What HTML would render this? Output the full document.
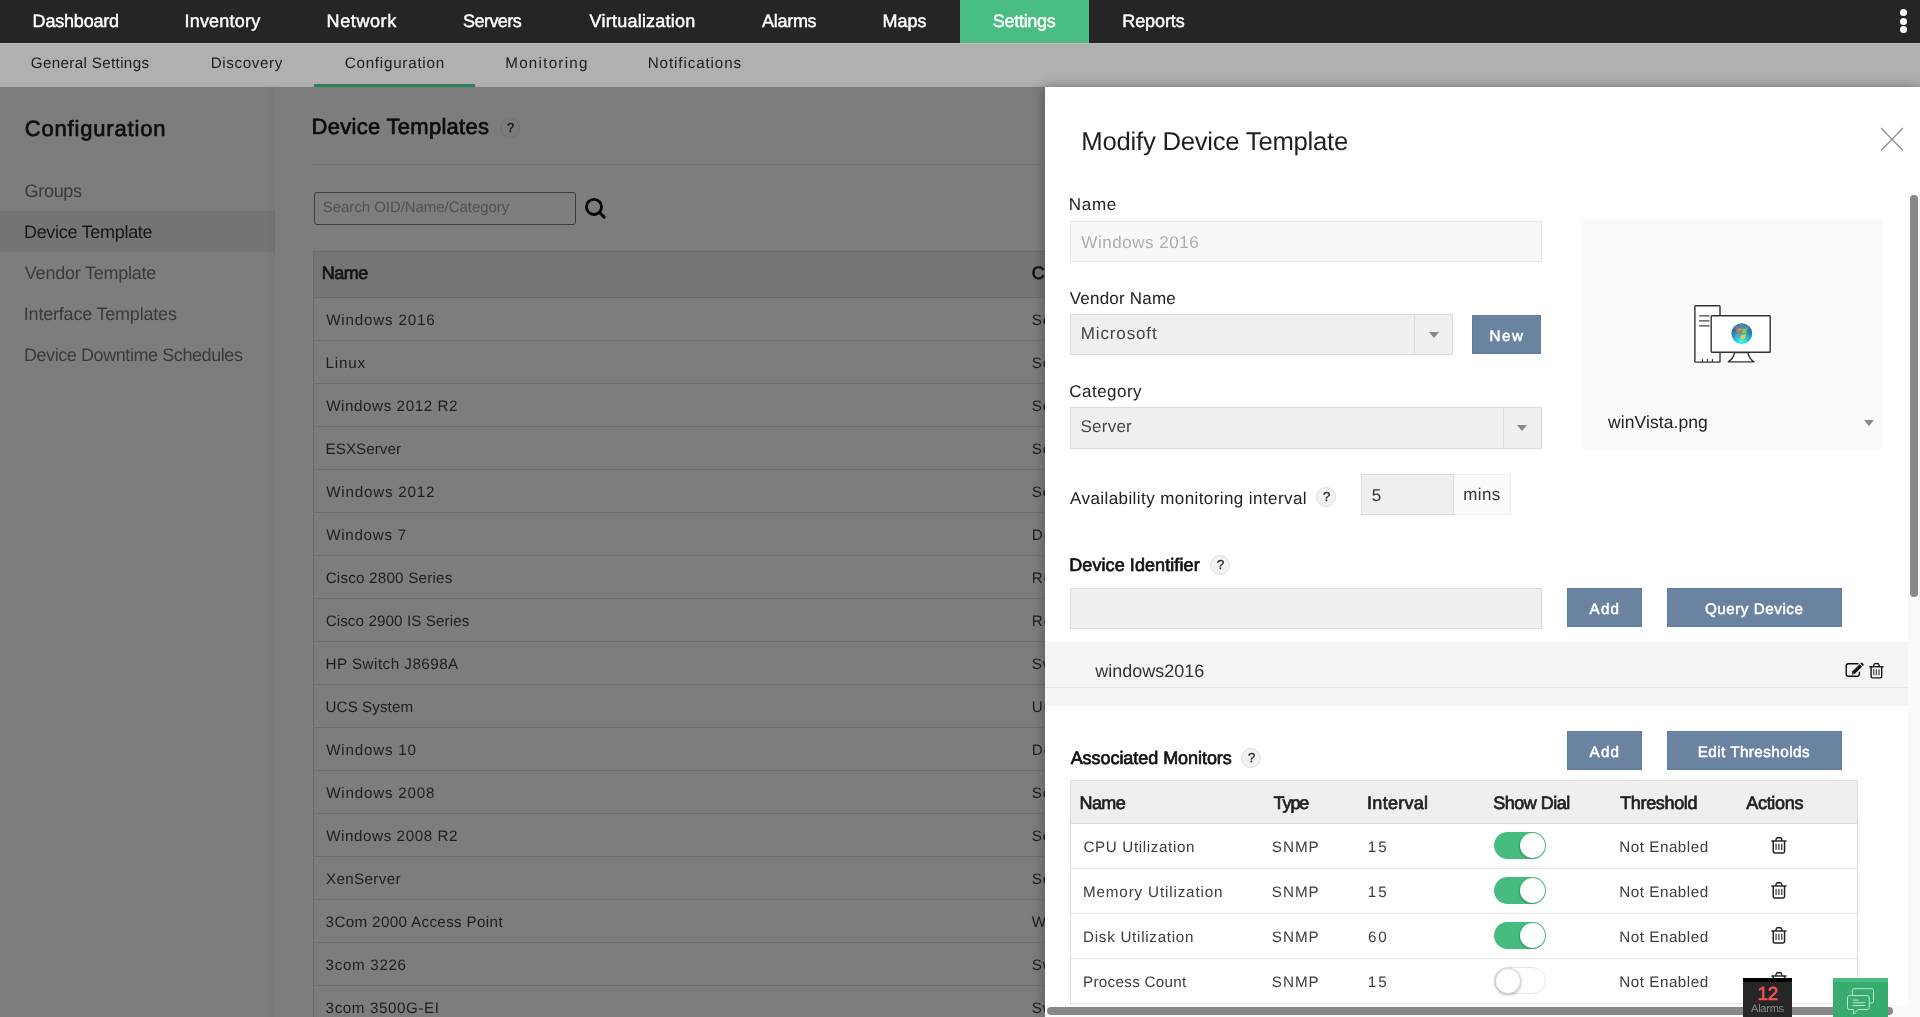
<!DOCTYPE html>
<html lang="en">
<head>
<meta charset="utf-8">
<title>Device Templates</title>
<style>
html,body{margin:0;padding:0;}
body{width:1920px;height:1017px;overflow:hidden;position:relative;background:#7d7d7d;font-family:"Liberation Sans",sans-serif;}
.t{will-change:transform;text-rendering:geometricPrecision;position:absolute;white-space:nowrap;line-height:1;font-family:"Liberation Sans",sans-serif;}
.a{position:absolute;box-sizing:border-box;}
.q{will-change:transform;text-rendering:geometricPrecision;position:absolute;box-sizing:border-box;width:20px;height:20px;border-radius:50%;font-size:13px;line-height:18px;text-indent:1px;-webkit-text-stroke:0.3px;text-align:center;font-family:"Liberation Sans",sans-serif;}
.btn{position:absolute;box-sizing:border-box;background:#6a83a0;border:1px solid #627e9e;}
.hl{position:absolute;height:1px;}
.tog{position:absolute;box-sizing:border-box;width:52px;height:27px;border-radius:14px;background:#46bc7e;}
.tog i{position:absolute;top:0.7px;left:25.8px;width:25.5px;height:25.5px;border-radius:50%;background:#fff;box-shadow:-1px 1px 2px rgba(0,0,0,0.22);}
.tog.off{background:#fff;border:1px solid #e4e4e4;}
.tog.off i{top:-0.5px;left:-0.5px;width:26px;height:26px;box-shadow:0 1px 3px rgba(0,0,0,0.3);border:1px solid #d6d6d6;box-sizing:border-box;}
.arr{position:absolute;width:0;height:0;border-left:5px solid transparent;border-right:5px solid transparent;border-top:6px solid #888;}
svg{position:absolute;overflow:visible;}
</style>
</head>
<body>
<!-- ===== background page (dimmed) ===== -->
<div class="a" style="left:0;top:0;width:1920px;height:43px;background:#252525;"></div>
<div class="a" style="left:960px;top:0;width:129px;height:43px;background:#4abe82;"></div>
<div class="a" style="left:1899.5px;top:9px;width:7px;height:7px;border-radius:50%;background:#fff;"></div>
<div class="a" style="left:1899.5px;top:17.5px;width:7px;height:7px;border-radius:50%;background:#fff;"></div>
<div class="a" style="left:1899.5px;top:26px;width:7px;height:7px;border-radius:50%;background:#fff;"></div>
<div class="a" style="left:0;top:43px;width:1920px;height:44px;background:linear-gradient(#bcbcbc 0,#bcbcbc 1px,#b0b0b0 1.5px,#b0b0b0 90%,#a8a8a8 100%);"></div>
<div class="a" style="left:314px;top:84px;width:161px;height:3px;background:#2c8054;"></div>
<!-- sidebar -->
<div class="a" style="left:0;top:87px;width:275px;height:930px;background:linear-gradient(to right,#7d7d7d 0,#7d7d7d 268px,#787878 275px);"></div>
<div class="a" style="left:0;top:211px;width:275px;height:41px;background:linear-gradient(to right,#747476 0,#747476 268px,#707072 275px);"></div>
<!-- main -->
<div class="q" style="left:500px;top:118px;background:#7b7b7b;border:1px solid #727272;color:#111;">?</div>
<div class="hl" style="left:313px;top:164px;width:1607px;background:#757575;"></div>
<div class="a" style="left:314px;top:192px;width:262px;height:33px;border:1px solid #3c3c3c;border-radius:3px;"></div>
<svg style="left:583px;top:196px;" width="26" height="26" viewBox="583 196 26 26"><circle cx="594" cy="206.9" r="7.55" fill="none" stroke="#060606" stroke-width="2.9"/><path d="M599.6 212.5 L604.2 217.1" stroke="#060606" stroke-width="3.1" stroke-linecap="round"/></svg>
<div class="a" style="left:313px;top:251px;width:1600px;height:47px;background:#757575;border:1px solid #6a6a6a;"></div>
<div class="a" style="left:313px;top:298px;width:1px;height:719px;background:#6e6e6e;"></div>
<div class="hl" style="left:314px;top:340px;width:1600px;background:#6e6e6e;"></div>
<div class="hl" style="left:314px;top:383px;width:1600px;background:#6e6e6e;"></div>
<div class="hl" style="left:314px;top:426px;width:1600px;background:#6e6e6e;"></div>
<div class="hl" style="left:314px;top:469px;width:1600px;background:#6e6e6e;"></div>
<div class="hl" style="left:314px;top:512px;width:1600px;background:#6e6e6e;"></div>
<div class="hl" style="left:314px;top:555px;width:1600px;background:#6e6e6e;"></div>
<div class="hl" style="left:314px;top:598px;width:1600px;background:#6e6e6e;"></div>
<div class="hl" style="left:314px;top:641px;width:1600px;background:#6e6e6e;"></div>
<div class="hl" style="left:314px;top:684px;width:1600px;background:#6e6e6e;"></div>
<div class="hl" style="left:314px;top:727px;width:1600px;background:#6e6e6e;"></div>
<div class="hl" style="left:314px;top:770px;width:1600px;background:#6e6e6e;"></div>
<div class="hl" style="left:314px;top:813px;width:1600px;background:#6e6e6e;"></div>
<div class="hl" style="left:314px;top:856px;width:1600px;background:#6e6e6e;"></div>
<div class="hl" style="left:314px;top:899px;width:1600px;background:#6e6e6e;"></div>
<div class="hl" style="left:314px;top:942px;width:1600px;background:#6e6e6e;"></div>
<div class="hl" style="left:314px;top:985px;width:1600px;background:#6e6e6e;"></div>

<span class="t" style="left:32px;padding-left:0.62px;top:12.00px;font-size:18px;color:#fff;-webkit-text-stroke:0.45px #fff;letter-spacing:-0.194px;">Dashboard</span>
<span class="t" style="left:184px;padding-left:0.53px;top:12.00px;font-size:18px;color:#fff;-webkit-text-stroke:0.45px #fff;letter-spacing:0.198px;">Inventory</span>
<span class="t" style="left:326px;padding-left:0.62px;top:12.00px;font-size:18px;color:#fff;-webkit-text-stroke:0.45px #fff;letter-spacing:0.597px;">Network</span>
<span class="t" style="left:462px;padding-left:0.98px;top:12.00px;font-size:18px;color:#fff;-webkit-text-stroke:0.45px #fff;letter-spacing:-0.532px;">Servers</span>
<span class="t" style="left:589px;padding-left:0.52px;top:12.00px;font-size:18px;color:#fff;-webkit-text-stroke:0.45px #fff;letter-spacing:0.239px;">Virtualization</span>
<span class="t" style="left:762px;padding-left:0.02px;top:12.00px;font-size:18px;color:#fff;-webkit-text-stroke:0.45px #fff;letter-spacing:-0.283px;">Alarms</span>
<span class="t" style="left:882px;padding-left:0.62px;top:12.00px;font-size:18px;color:#fff;-webkit-text-stroke:0.45px #fff;letter-spacing:-0.004px;">Maps</span>
<span class="t" style="left:992px;padding-left:0.79px;top:12.00px;font-size:18px;color:#fff;-webkit-text-stroke:0.45px #fff;letter-spacing:-0.293px;">Settings</span>
<span class="t" style="left:1122px;padding-left:0.29px;top:12.00px;font-size:18px;color:#fff;-webkit-text-stroke:0.45px #fff;letter-spacing:-0.101px;">Reports</span>
<span class="t" style="left:30px;padding-left:0.72px;top:56.00px;font-size:15.2px;color:#1c1c1c;letter-spacing:0.347px;">General Settings</span>
<span class="t" style="left:210px;padding-left:0.78px;top:56.00px;font-size:15.2px;color:#1c1c1c;letter-spacing:0.612px;">Discovery</span>
<span class="t" style="left:344px;padding-left:0.72px;top:56.00px;font-size:15.2px;color:#1c1c1c;letter-spacing:0.758px;">Configuration</span>
<span class="t" style="left:505px;padding-left:0.27px;top:56.00px;font-size:15.2px;color:#1c1c1c;letter-spacing:1.254px;">Monitoring</span>
<span class="t" style="left:647px;padding-left:0.78px;top:56.00px;font-size:15.2px;color:#1c1c1c;letter-spacing:0.885px;">Notifications</span>
<span class="t" style="left:24px;padding-left:0.77px;top:118.00px;font-size:22px;color:#0e0e0e;-webkit-text-stroke:0.7px #0e0e0e;letter-spacing:0.818px;">Configuration</span>
<span class="t" style="left:24px;padding-left:0.52px;top:182.00px;font-size:18px;color:#3a3a3a;letter-spacing:-0.297px;">Groups</span>
<span class="t" style="left:23px;padding-left:0.94px;top:223.00px;font-size:18px;color:#161616;letter-spacing:-0.293px;">Device Template</span>
<span class="t" style="left:24px;padding-left:0.83px;top:264.00px;font-size:18px;color:#3a3a3a;letter-spacing:-0.230px;">Vendor Template</span>
<span class="t" style="left:23px;padding-left:0.82px;top:305.00px;font-size:18px;color:#3a3a3a;letter-spacing:-0.205px;">Interface Templates</span>
<span class="t" style="left:23px;padding-left:0.94px;top:346.00px;font-size:18px;color:#3a3a3a;letter-spacing:-0.423px;">Device Downtime Schedules</span>
<span class="t" style="left:311px;padding-left:0.61px;top:116.00px;font-size:22px;color:#0c0c0c;-webkit-text-stroke:0.7px #0c0c0c;letter-spacing:0.276px;">Device Templates</span>
<span class="t" style="left:322px;padding-left:0.80px;top:200.00px;font-size:15px;color:#505050;letter-spacing:-0.050px;">Search OID/Name/Category</span>
<span class="t" style="left:321px;padding-left:0.68px;top:264.00px;font-size:18px;color:#141414;-webkit-text-stroke:0.7px #141414;letter-spacing:-0.509px;">Name</span>
<span class="t" style="left:1031px;padding-left:0.70px;top:264.00px;font-size:18px;color:#141414;-webkit-text-stroke:0.7px #141414;">Category</span>
<span class="t" style="left:326px;padding-left:0.14px;top:313.00px;font-size:15.2px;color:#1e1e1e;letter-spacing:0.804px;">Windows 2016</span>
<span class="t" style="left:1031px;padding-left:0.84px;top:313.00px;font-size:15.2px;color:#1e1e1e;letter-spacing:0.9px;">Server</span>
<span class="t" style="left:325px;padding-left:0.53px;top:356.00px;font-size:15.2px;color:#1e1e1e;letter-spacing:0.804px;">Linux</span>
<span class="t" style="left:1031px;padding-left:0.84px;top:356.00px;font-size:15.2px;color:#1e1e1e;letter-spacing:0.9px;">Server</span>
<span class="t" style="left:326px;padding-left:0.14px;top:399.00px;font-size:15.2px;color:#1e1e1e;letter-spacing:0.581px;">Windows 2012 R2</span>
<span class="t" style="left:1031px;padding-left:0.84px;top:399.00px;font-size:15.2px;color:#1e1e1e;letter-spacing:0.9px;">Server</span>
<span class="t" style="left:325px;padding-left:0.53px;top:442.00px;font-size:15.2px;color:#1e1e1e;letter-spacing:0.054px;">ESXServer</span>
<span class="t" style="left:1031px;padding-left:0.84px;top:442.00px;font-size:15.2px;color:#1e1e1e;letter-spacing:0.9px;">Server</span>
<span class="t" style="left:326px;padding-left:0.14px;top:485.00px;font-size:15.2px;color:#1e1e1e;letter-spacing:0.798px;">Windows 2012</span>
<span class="t" style="left:1031px;padding-left:0.84px;top:485.00px;font-size:15.2px;color:#1e1e1e;letter-spacing:0.9px;">Server</span>
<span class="t" style="left:326px;padding-left:0.14px;top:528.00px;font-size:15.2px;color:#1e1e1e;letter-spacing:0.712px;">Windows 7</span>
<span class="t" style="left:1031px;padding-left:0.84px;top:528.00px;font-size:15.2px;color:#1e1e1e;letter-spacing:0.9px;">Desktop</span>
<span class="t" style="left:325px;padding-left:0.64px;top:571.00px;font-size:15.2px;color:#1e1e1e;letter-spacing:0.216px;">Cisco 2800 Series</span>
<span class="t" style="left:1031px;padding-left:0.84px;top:571.00px;font-size:15.2px;color:#1e1e1e;letter-spacing:0.9px;">Router</span>
<span class="t" style="left:325px;padding-left:0.64px;top:614.00px;font-size:15.2px;color:#1e1e1e;letter-spacing:0.100px;">Cisco 2900 IS Series</span>
<span class="t" style="left:1031px;padding-left:0.84px;top:614.00px;font-size:15.2px;color:#1e1e1e;letter-spacing:0.9px;">Router</span>
<span class="t" style="left:325px;padding-left:0.53px;top:657.00px;font-size:15.2px;color:#1e1e1e;letter-spacing:0.480px;">HP Switch J8698A</span>
<span class="t" style="left:1031px;padding-left:0.84px;top:657.00px;font-size:15.2px;color:#1e1e1e;letter-spacing:0.9px;">Switch</span>
<span class="t" style="left:325px;padding-left:0.60px;top:700.00px;font-size:15.2px;color:#1e1e1e;letter-spacing:0.061px;">UCS System</span>
<span class="t" style="left:1031px;padding-left:0.84px;top:700.00px;font-size:15.2px;color:#1e1e1e;letter-spacing:0.9px;">UCS</span>
<span class="t" style="left:326px;padding-left:0.14px;top:743.00px;font-size:15.2px;color:#1e1e1e;letter-spacing:0.791px;">Windows 10</span>
<span class="t" style="left:1031px;padding-left:0.84px;top:743.00px;font-size:15.2px;color:#1e1e1e;letter-spacing:0.9px;">Desktop</span>
<span class="t" style="left:326px;padding-left:0.14px;top:786.00px;font-size:15.2px;color:#1e1e1e;letter-spacing:0.798px;">Windows 2008</span>
<span class="t" style="left:1031px;padding-left:0.84px;top:786.00px;font-size:15.2px;color:#1e1e1e;letter-spacing:0.9px;">Server</span>
<span class="t" style="left:326px;padding-left:0.14px;top:829.00px;font-size:15.2px;color:#1e1e1e;letter-spacing:0.581px;">Windows 2008 R2</span>
<span class="t" style="left:1031px;padding-left:0.84px;top:829.00px;font-size:15.2px;color:#1e1e1e;letter-spacing:0.9px;">Server</span>
<span class="t" style="left:326px;padding-left:0.03px;top:872.00px;font-size:15.2px;color:#1e1e1e;letter-spacing:0.345px;">XenServer</span>
<span class="t" style="left:1031px;padding-left:0.84px;top:872.00px;font-size:15.2px;color:#1e1e1e;letter-spacing:0.9px;">Server</span>
<span class="t" style="left:325px;padding-left:0.62px;top:915.00px;font-size:15.2px;color:#1e1e1e;letter-spacing:0.348px;">3Com 2000 Access Point</span>
<span class="t" style="left:1031px;padding-left:0.84px;top:915.00px;font-size:15.2px;color:#1e1e1e;letter-spacing:0.9px;">Wireless</span>
<span class="t" style="left:325px;padding-left:0.62px;top:958.00px;font-size:15.2px;color:#1e1e1e;letter-spacing:0.664px;">3com 3226</span>
<span class="t" style="left:1031px;padding-left:0.84px;top:958.00px;font-size:15.2px;color:#1e1e1e;letter-spacing:0.9px;">Switch</span>
<span class="t" style="left:325px;padding-left:0.62px;top:1001.00px;font-size:15.2px;color:#1e1e1e;letter-spacing:0.583px;">3com 3500G-EI</span>
<span class="t" style="left:1031px;padding-left:0.84px;top:1001.00px;font-size:15.2px;color:#1e1e1e;letter-spacing:0.9px;">Switch</span>

<!-- ===== modal ===== -->
<div class="a" style="left:1045px;top:87px;width:875px;height:930px;background:#fff;box-shadow:0 0 13px rgba(0,0,0,0.32);"></div>
<svg style="left:1881px;top:127.5px;" width="22" height="22.5" viewBox="0 0 22 22.5"><path d="M0 0 L22 22.5 M22 0 L0 22.5" stroke="#8a8a8a" stroke-width="1.1" fill="none"/></svg>
<!-- name -->
<div class="a" style="left:1070px;top:221px;width:472px;height:41px;background:#f8f8f8;border:1px solid #e7e7e7;"></div>
<!-- vendor -->
<div class="a" style="left:1070px;top:314px;width:383px;height:41px;background:#f0f0f0;border:1px solid #dcdcdc;"></div>
<div class="a" style="left:1414px;top:315px;width:1px;height:39px;background:#dcdcdc;"></div>
<div class="arr" style="left:1429px;top:332px;"></div>
<div class="btn" style="left:1472px;top:315px;width:69px;height:39px;"></div>
<!-- category -->
<div class="a" style="left:1070px;top:407px;width:472px;height:42px;background:#f0f0f0;border:1px solid #dcdcdc;"></div>
<div class="a" style="left:1503px;top:408px;width:1px;height:40px;background:#dcdcdc;"></div>
<div class="arr" style="left:1517px;top:425px;"></div>
<!-- image box -->
<div class="a" style="left:1583px;top:220px;width:300px;height:229px;background:#f9f9fb;"></div>
<div class="arr" style="left:1864px;top:420px;"></div>
<svg style="left:1690px;top:300px;" width="90" height="70" viewBox="1690 300 90 70">
<defs><radialGradient id="orb" cx="50%" cy="88%" r="80%"><stop offset="0" stop-color="#3af8f2"/><stop offset="0.3" stop-color="#22d3dc"/><stop offset="0.6" stop-color="#2595b9"/><stop offset="1" stop-color="#2d6090"/></radialGradient></defs>
<rect x="1694.9" y="305.8" width="25.1" height="56.3" rx="0.8" fill="#fff" stroke="#333" stroke-width="1.4"/>
<path d="M1699.1 315.9H1709.5M1699.1 320.8H1709.5M1699.1 325.8H1709.5" stroke="#444" stroke-width="1.2"/>
<path d="M1702.4 359V362M1707.4 359V362M1712.4 359V362" stroke="#333" stroke-width="1.1"/>
<path d="M1734.6 352.5 C1733.6 357 1731.5 360 1728.2 361.8 H1754.1 C1750.8 360 1748.8 357 1747.8 352.5 Z" fill="#fff" stroke="#333" stroke-width="1.3" stroke-linejoin="round"/>
<rect x="1711.2" y="315.8" width="59" height="36.4" rx="0.8" fill="#fff" stroke="#333" stroke-width="1.4"/>
<circle cx="1741.8" cy="333.6" r="10.4" fill="url(#orb)"/>
<path d="M1736.9 329.2 q2.2-1.6 4.6-.5 l-.9 4.3 q-2.4-1-4.6.5z" fill="#f2683a"/>
<path d="M1742.5 329 q2.4 1 4.8-.4 l-1 4.4 q-2.3 1.3-4.7.3z" fill="#8cc63e"/>
<path d="M1735.7 334.6 q2.3-1.5 4.6-.4 l-.9 4.2 q-2.3-1-4.6.5z" fill="#5aa5dc"/>
<path d="M1741.2 334.5 q2.4 1 4.8-.4 l-1 4.3 q-2.4 1.4-4.7.3z" fill="#fbc531"/>
<ellipse cx="1741.8" cy="327" rx="7.5" ry="3.6" fill="#fff" opacity="0.18"/>
</svg>
<!-- interval -->
<div class="q" style="left:1316px;top:487px;background:#f1f1f1;border:1px solid #dedede;color:#222;">?</div>
<div class="a" style="left:1361px;top:474px;width:93px;height:41px;background:#f0f0f0;border:1px solid #dcdcdc;"></div>
<div class="a" style="left:1454px;top:474px;width:57px;height:41px;background:#fafafa;border:1px solid #efefef;border-left:0;"></div>
<!-- identifier -->
<div class="q" style="left:1210px;top:555px;background:#f1f1f1;border:1px solid #dedede;color:#222;">?</div>
<div class="a" style="left:1070px;top:588px;width:472px;height:41px;background:#f0f0f0;border:1px solid #dcdcdc;"></div>
<div class="btn" style="left:1567px;top:588px;width:75px;height:39px;"></div>
<div class="btn" style="left:1667px;top:588px;width:175px;height:39px;"></div>
<div class="a" style="left:1045px;top:642px;width:863px;height:64px;background:#f5f5f5;"></div>
<div class="hl" style="left:1045px;top:687px;width:863px;background:#e6e6e6;"></div>
<svg style="left:1845px;top:662px;" width="20" height="16" viewBox="0 0 20 16">
<path d="M13 1.7 H3.4 Q1.2 1.7 1.2 3.9 V12 Q1.2 14.2 3.4 14.2 H12.2 Q14.4 14.2 14.4 12 V10.2" stroke="#111" stroke-width="1.4" fill="none" stroke-linecap="round"/>
<path d="M7.1 9.6 L14.5 2.2 L17.0 4.7 L9.6 12.1 L6.7 12.8 Z" fill="#111"/>
<path d="M15.3 1.5 L16.1 0.7 Q16.6 0.3 17.1 0.7 L18.6 2.2 Q19 2.7 18.6 3.2 L17.8 4.0 Z" fill="#111"/>
<path d="M7.8 10.4 L8.9 11.5 L7.5 11.9 Z" fill="#f5f5f5"/>
<path d="M9.4 8.3 L13.8 3.9" stroke="#f5f5f5" stroke-width="0.5" stroke-dasharray="0.8 0.7"/>
</svg>
<svg style="left:1869.1px;top:662.7px;" width="15" height="16" viewBox="0 0 15 16">
<path d="M0.2 3.75H14.6" stroke="#111" stroke-width="1.35" fill="none"/>
<path d="M4.3 3.6 L5.3 0.95 Q5.5 0.65 5.9 0.65 H8.9 Q9.3 0.65 9.5 0.95 L10.5 3.6" stroke="#111" stroke-width="1.3" fill="none"/>
<path d="M2.1 3.8 V13.6 Q2.1 14.9 3.4 14.9 H11.4 Q12.7 14.9 12.7 13.6 V3.8" stroke="#111" stroke-width="1.4" fill="none"/>
<path d="M4.75 6.3V12.3M7.4 6.3V12.3M10.05 6.3V12.3" stroke="#555" stroke-width="1.35" fill="none"/>
</svg>
<!-- monitors -->
<div class="q" style="left:1241px;top:748px;background:#f1f1f1;border:1px solid #dedede;color:#222;">?</div>
<div class="btn" style="left:1567px;top:731px;width:75px;height:39px;"></div>
<div class="btn" style="left:1667px;top:731px;width:175px;height:39px;"></div>
<div class="a" style="left:1070px;top:780px;width:788px;height:240px;border:1px solid #dcdcdc;"></div>
<div class="a" style="left:1071px;top:781px;width:786px;height:43px;background:#efefef;"></div>
<div class="hl" style="left:1071px;top:823px;width:786px;background:#d8d8d8;"></div>
<div class="hl" style="left:1071px;top:868px;width:786px;background:#e4e4e4;"></div>
<div class="hl" style="left:1071px;top:913px;width:786px;background:#e4e4e4;"></div>
<div class="hl" style="left:1071px;top:958px;width:786px;background:#e4e4e4;"></div>
<div class="hl" style="left:1071px;top:1003px;width:786px;background:#e4e4e4;"></div>
<div class="tog" style="left:1494px;top:832px;"><i></i></div>
<div class="tog" style="left:1494px;top:877px;"><i></i></div>
<div class="tog" style="left:1494px;top:922px;"><i></i></div>
<div class="tog off" style="left:1494px;top:967px;"><i></i></div>
<svg style="left:1771.1px;top:837.4px;" width="16" height="17.07" viewBox="0 0 15 16">
<path d="M0.2 3.75H14.6" stroke="#222" stroke-width="1.35" fill="none"/>
<path d="M4.3 3.6 L5.3 0.95 Q5.5 0.65 5.9 0.65 H8.9 Q9.3 0.65 9.5 0.95 L10.5 3.6" stroke="#222" stroke-width="1.3" fill="none"/>
<path d="M2.1 3.8 V13.6 Q2.1 14.9 3.4 14.9 H11.4 Q12.7 14.9 12.7 13.6 V3.8" stroke="#222" stroke-width="1.4" fill="none"/>
<path d="M4.75 6.3V12.3M7.4 6.3V12.3M10.05 6.3V12.3" stroke="#555" stroke-width="1.35" fill="none"/>
</svg>
<svg style="left:1771.1px;top:882.4px;" width="16" height="17.07" viewBox="0 0 15 16">
<path d="M0.2 3.75H14.6" stroke="#222" stroke-width="1.35" fill="none"/>
<path d="M4.3 3.6 L5.3 0.95 Q5.5 0.65 5.9 0.65 H8.9 Q9.3 0.65 9.5 0.95 L10.5 3.6" stroke="#222" stroke-width="1.3" fill="none"/>
<path d="M2.1 3.8 V13.6 Q2.1 14.9 3.4 14.9 H11.4 Q12.7 14.9 12.7 13.6 V3.8" stroke="#222" stroke-width="1.4" fill="none"/>
<path d="M4.75 6.3V12.3M7.4 6.3V12.3M10.05 6.3V12.3" stroke="#555" stroke-width="1.35" fill="none"/>
</svg>
<svg style="left:1771.1px;top:927.4px;" width="16" height="17.07" viewBox="0 0 15 16">
<path d="M0.2 3.75H14.6" stroke="#222" stroke-width="1.35" fill="none"/>
<path d="M4.3 3.6 L5.3 0.95 Q5.5 0.65 5.9 0.65 H8.9 Q9.3 0.65 9.5 0.95 L10.5 3.6" stroke="#222" stroke-width="1.3" fill="none"/>
<path d="M2.1 3.8 V13.6 Q2.1 14.9 3.4 14.9 H11.4 Q12.7 14.9 12.7 13.6 V3.8" stroke="#222" stroke-width="1.4" fill="none"/>
<path d="M4.75 6.3V12.3M7.4 6.3V12.3M10.05 6.3V12.3" stroke="#555" stroke-width="1.35" fill="none"/>
</svg>
<svg style="left:1771.1px;top:972.4px;" width="16" height="17.07" viewBox="0 0 15 16">
<path d="M0.2 3.75H14.6" stroke="#222" stroke-width="1.35" fill="none"/>
<path d="M4.3 3.6 L5.3 0.95 Q5.5 0.65 5.9 0.65 H8.9 Q9.3 0.65 9.5 0.95 L10.5 3.6" stroke="#222" stroke-width="1.3" fill="none"/>
<path d="M2.1 3.8 V13.6 Q2.1 14.9 3.4 14.9 H11.4 Q12.7 14.9 12.7 13.6 V3.8" stroke="#222" stroke-width="1.4" fill="none"/>
<path d="M4.75 6.3V12.3M7.4 6.3V12.3M10.05 6.3V12.3" stroke="#555" stroke-width="1.35" fill="none"/>
</svg>
<span class="t" style="left:1081px;padding-left:0.35px;top:130.00px;font-size:25.7px;color:#1f1f1f;letter-spacing:-0.251px;">Modify Device Template</span>
<span class="t" style="left:1068px;padding-left:0.82px;top:196.00px;font-size:17px;color:#222;letter-spacing:0.683px;">Name</span>
<span class="t" style="left:1081px;padding-left:0.33px;top:234.00px;font-size:17px;color:#adadad;letter-spacing:0.523px;">Windows 2016</span>
<span class="t" style="left:1069px;padding-left:0.74px;top:290.00px;font-size:17px;color:#222;letter-spacing:0.212px;">Vendor Name</span>
<span class="t" style="left:1080px;padding-left:0.85px;top:325.00px;font-size:17px;color:#444;letter-spacing:0.855px;">Microsoft</span>
<span class="t" style="left:1489px;padding-left:0.60px;top:329.00px;font-size:15.2px;color:#fff;-webkit-text-stroke:0.55px #fff;letter-spacing:1.454px;">New</span>
<span class="t" style="left:1069px;padding-left:0.32px;top:383.00px;font-size:17px;color:#222;letter-spacing:0.464px;">Category</span>
<span class="t" style="left:1080px;padding-left:0.45px;top:418.00px;font-size:17px;color:#444;letter-spacing:0.254px;">Server</span>
<span class="t" style="left:1070px;padding-left:0.07px;top:490.00px;font-size:17px;color:#222;letter-spacing:0.415px;">Availability monitoring interval</span>
<span class="t" style="left:1371px;padding-left:0.87px;top:487.00px;font-size:17px;color:#333;letter-spacing:1.231px;">5</span>
<span class="t" style="left:1463px;padding-left:0.35px;top:486.00px;font-size:17px;color:#333;letter-spacing:0.332px;">mins</span>
<span class="t" style="left:1069px;padding-left:0.26px;top:556.00px;font-size:18px;color:#111;-webkit-text-stroke:0.7px #111;letter-spacing:0.082px;">Device Identifier</span>
<span class="t" style="left:1589px;padding-left:0.61px;top:602.00px;font-size:15.2px;color:#fff;-webkit-text-stroke:0.55px #fff;letter-spacing:1.173px;">Add</span>
<span class="t" style="left:1704px;padding-left:0.93px;top:602.00px;font-size:15.2px;color:#fff;-webkit-text-stroke:0.55px #fff;letter-spacing:0.542px;">Query Device</span>
<span class="t" style="left:1095px;padding-left:0.28px;top:662.00px;font-size:18px;color:#333;letter-spacing:-0.020px;">windows2016</span>
<span class="t" style="left:1070px;padding-left:0.65px;top:749.00px;font-size:18px;color:#111;-webkit-text-stroke:0.7px #111;letter-spacing:-0.051px;">Associated Monitors</span>
<span class="t" style="left:1589px;padding-left:0.61px;top:745.00px;font-size:15.2px;color:#fff;-webkit-text-stroke:0.55px #fff;letter-spacing:1.173px;">Add</span>
<span class="t" style="left:1697px;padding-left:0.68px;top:745.00px;font-size:15.2px;color:#fff;-webkit-text-stroke:0.55px #fff;letter-spacing:0.469px;">Edit Thresholds</span>
<span class="t" style="left:1079px;padding-left:0.52px;top:794.00px;font-size:18px;color:#222;-webkit-text-stroke:0.7px #222;letter-spacing:-0.629px;">Name</span>
<span class="t" style="left:1273px;padding-left:0.49px;top:794.00px;font-size:18px;color:#222;-webkit-text-stroke:0.7px #222;letter-spacing:-1.047px;">Type</span>
<span class="t" style="left:1367px;padding-left:0.08px;top:794.00px;font-size:18px;color:#222;-webkit-text-stroke:0.7px #222;letter-spacing:0.277px;">Interval</span>
<span class="t" style="left:1493px;padding-left:0.13px;top:794.00px;font-size:18px;color:#222;-webkit-text-stroke:0.7px #222;letter-spacing:-0.479px;">Show Dial</span>
<span class="t" style="left:1620px;padding-left:0.20px;top:794.00px;font-size:18px;color:#222;-webkit-text-stroke:0.7px #222;letter-spacing:-0.335px;">Threshold</span>
<span class="t" style="left:1746px;padding-left:0.28px;top:794.00px;font-size:18px;color:#222;-webkit-text-stroke:0.7px #222;letter-spacing:-0.316px;">Actions</span>
<span class="t" style="left:1083px;padding-left:0.53px;top:840.00px;font-size:15.2px;color:#3c3c3c;letter-spacing:0.629px;">CPU Utilization</span>
<span class="t" style="left:1271px;padding-left:0.81px;top:840.00px;font-size:15.2px;color:#3c3c3c;letter-spacing:0.993px;">SNMP</span>
<span class="t" style="left:1367px;padding-left:0.75px;top:840.00px;font-size:15.2px;color:#3c3c3c;letter-spacing:2.108px;">15</span>
<span class="t" style="left:1619px;padding-left:0.31px;top:840.00px;font-size:15.2px;color:#3c3c3c;letter-spacing:0.526px;">Not Enabled</span>
<span class="t" style="left:1083px;padding-left:0.07px;top:885.00px;font-size:15.2px;color:#3c3c3c;letter-spacing:0.852px;">Memory Utilization</span>
<span class="t" style="left:1271px;padding-left:0.81px;top:885.00px;font-size:15.2px;color:#3c3c3c;letter-spacing:0.993px;">SNMP</span>
<span class="t" style="left:1367px;padding-left:0.75px;top:885.00px;font-size:15.2px;color:#3c3c3c;letter-spacing:2.108px;">15</span>
<span class="t" style="left:1619px;padding-left:0.31px;top:885.00px;font-size:15.2px;color:#3c3c3c;letter-spacing:0.526px;">Not Enabled</span>
<span class="t" style="left:1083px;padding-left:0.07px;top:930.00px;font-size:15.2px;color:#3c3c3c;letter-spacing:0.720px;">Disk Utilization</span>
<span class="t" style="left:1271px;padding-left:0.81px;top:930.00px;font-size:15.2px;color:#3c3c3c;letter-spacing:0.993px;">SNMP</span>
<span class="t" style="left:1368px;padding-left:0.12px;top:930.00px;font-size:15.2px;color:#3c3c3c;letter-spacing:1.734px;">60</span>
<span class="t" style="left:1619px;padding-left:0.31px;top:930.00px;font-size:15.2px;color:#3c3c3c;letter-spacing:0.526px;">Not Enabled</span>
<span class="t" style="left:1083px;padding-left:0.07px;top:975.00px;font-size:15.2px;color:#3c3c3c;letter-spacing:0.302px;">Process Count</span>
<span class="t" style="left:1271px;padding-left:0.81px;top:975.00px;font-size:15.2px;color:#3c3c3c;letter-spacing:0.993px;">SNMP</span>
<span class="t" style="left:1367px;padding-left:0.75px;top:975.00px;font-size:15.2px;color:#3c3c3c;letter-spacing:2.108px;">15</span>
<span class="t" style="left:1619px;padding-left:0.31px;top:975.00px;font-size:15.2px;color:#3c3c3c;letter-spacing:0.526px;">Not Enabled</span>
<span class="t" style="left:1608px;padding-left:0.12px;top:414.00px;font-size:17.5px;color:#222;letter-spacing:0.076px;">winVista.png</span>
<!-- scrollbars -->
<div class="a" style="left:1908px;top:193px;width:12px;height:824px;background:#fafafa;"></div>
<div class="a" style="left:1045px;top:1005px;width:875px;height:12px;background:#fafafa;"></div>
<div class="a" style="left:1910px;top:195px;width:8px;height:402px;border-radius:4px;background:#888;"></div>
<div class="a" style="left:1047px;top:1007px;width:846px;height:8px;border-radius:4px;background:#888;"></div>
<!-- floating widgets -->
<div class="a" style="left:1743px;top:978px;width:49px;height:39px;background:#262626;"></div>
<div class="a" style="left:1743px;top:978px;width:49px;height:4px;background:#000;"></div>
<div class="a" style="left:1833px;top:978px;width:55px;height:39px;background:#38ab6e;"></div>
<div class="a" style="left:1833px;top:978px;width:55px;height:4px;background:#47bd82;"></div>
<svg style="left:1845px;top:986px;" width="32" height="30" viewBox="1845 986 32 30">
<path d="M1852.3 995 V990.6 Q1852.3 988.7 1854.2 988.7 H1871.6 Q1873.5 988.7 1873.5 990.6 V1001.2 Q1873.5 1003.1 1871.6 1003.1 H1870" fill="none" stroke="#bfe8d2" stroke-width="1"/>
<path d="M1849.4 995.6 H1867.3 Q1869.2 995.6 1869.2 997.5 V1007.6 Q1869.2 1009.5 1867.3 1009.5 H1858.2 L1853.6 1014 V1009.5 H1849.4 Q1847.5 1009.5 1847.5 1007.6 V997.5 Q1847.5 995.6 1849.4 995.6 Z" fill="#38ab6e" stroke="#bfe8d2" stroke-width="1"/>
<path d="M1852.6 1000.1H1859M1852.6 1002.8H1865M1852.6 1005.5H1865" stroke="#bfe8d2" stroke-width="1" fill="none"/>
</svg>
<span class="t" style="left:1757px;padding-left:0.57px;top:985.00px;font-size:19px;color:#f0524f;-webkit-text-stroke:0.7px #f0524f;letter-spacing:-0.265px;">12</span>
<span class="t" style="left:1751px;padding-left:0.06px;top:1004.00px;font-size:11px;color:#8c8c8c;letter-spacing:-0.235px;">Alarms</span>
</body>
</html>
